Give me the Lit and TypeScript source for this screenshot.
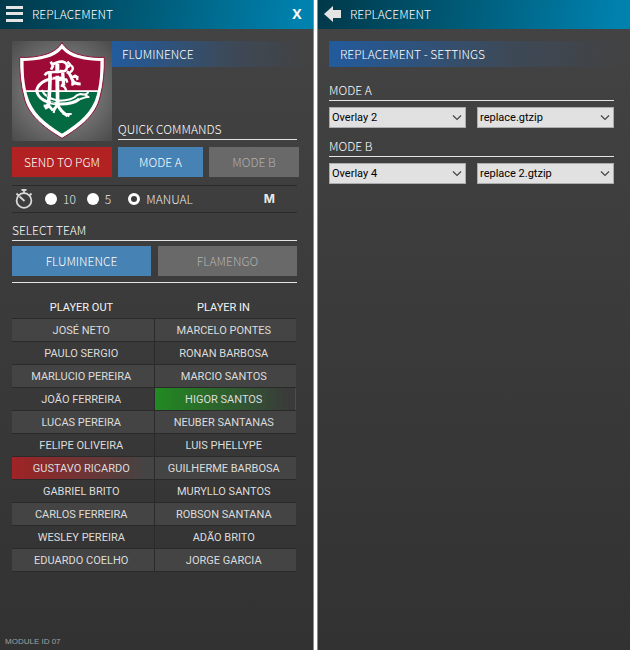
import { LitElement, html, css, svg } from "lit";
import { customElement } from "lit/decorators.js";
import { classMap } from "lit/directives/class-map.js";

const ROWS: [string, string][] = [
  ["JOSÉ NETO", "MARCELO PONTES"],
  ["PAULO SERGIO", "RONAN BARBOSA"],
  ["MARLUCIO PEREIRA", "MARCIO SANTOS"],
  ["JOÃO FERREIRA", "HIGOR SANTOS"],
  ["LUCAS PEREIRA", "NEUBER SANTANAS"],
  ["FELIPE OLIVEIRA", "LUIS PHELLYPE"],
  ["GUSTAVO RICARDO", "GUILHERME BARBOSA"],
  ["GABRIEL BRITO", "MURYLLO SANTOS"],
  ["CARLOS FERREIRA", "ROBSON SANTANA"],
  ["WESLEY PEREIRA", "ADÃO BRITO"],
  ["EDUARDO COELHO", "JORGE GARCIA"],
];
const PLAYER_OUT = "GUSTAVO RICARDO";
const PLAYER_IN = "HIGOR SANTOS";

const shield =
  "M156 14 C146 31 128 43 108 49 C84 56 54 60 29 58 C28 98 32 142 42 177 C54 229 96 265 156 301 C216 265 258 229 270 177 C280 142 284 98 283 58 C258 60 228 56 204 49 C184 43 166 31 156 14 Z";

const crest = svg`
  <defs><clipPath id="field"><path d="M156 32 C143 47 126 56 108 60 C84 67 60 69 40 69 C40 105 44 143 52 172 C65 221 102 254 156 287 C210 254 247 221 260 172 C268 143 272 105 272 69 C252 69 228 67 204 60 C186 56 169 47 156 32 Z"/></clipPath></defs>
  <path d=${shield} fill="#fff" stroke="#8d1338" stroke-width="3"/>
  <g clip-path="url(#field)">
    <rect x="20" y="20" width="272" height="138" fill="#9c0a35"/>
    <rect x="20" y="161" width="272" height="140" fill="#046a41"/>
    <rect x="20" y="157" width="272" height="5" fill="#fff"/>
  </g>
  <g transform="translate(66 51)" fill="none" stroke="#fff" stroke-linejoin="round">
    <path stroke-width="11" d="M54 50 C55 85 52 125 48 158"/>
    <path stroke-width="12" d="M76 26 L76 52 M76 62 L77 156"/>
    <path stroke-width="8" d="M38 61 C44 49 56 51 80 51 L92 48"/>
    <path stroke-width="8" d="M56 20 L63 33 L57 44 M61 27 C74 26 76 18 92 20 C104 22 108 32 103 43 C100 49 92 50 84 47"/>
    <path stroke-width="7" d="M106 20 L114 28 L108 38 M110 29 C121 31 126 38 120 47 L109 57"/>
    <path stroke-width="9" d="M104 50 C116 54 116 67 122 76 C125 83 133 87 146 87"/>
    <path stroke-width="7" d="M118 68 L130 62 L139 68 M133 64 L137 75 M122 78 L121 89 L129 84"/>
    <path stroke-width="10" d="M92 53 L95 92"/>
    <path stroke-width="7" d="M78 75 L103 73 L106 83 M88 88 L99 98 L103 107 M86 91 L95 94"/>
    <path stroke-width="9" d="M91 69 C56 65 20 80 14 105 C16 132 46 145 80 147 C110 148 130 142 142 132"/>
    <path stroke-width="6" d="M29 105 C38 124 58 134 82 137 C108 137 126 131 136 120 L146 117 C156 120 163 118 168 113 L160 120 L170 126 C158 124 154 132 142 132"/>
    <path stroke-width="8" d="M35 153 L50 151 L63 167 M49 155 L39 161"/>
    <path stroke-width="9" d="M76 150 L66 164 M78 151 C84 166 93 173 107 183"/>
    <path stroke-width="6" d="M68 159 L65 174 M92 177 L119 177 M104 178 L112 184"/>
  </g>
  <g transform="translate(66 51)" fill="none" stroke="#9c0a35" stroke-width="2">
    <path d="M62 56 L62 71 M68 55 L68 66 M84 54 L84 66 M84 79 L84 102"/>
  </g>
  <g transform="translate(66 51)" fill="none" stroke="#046a41" stroke-width="2">
    <path d="M69 112 L69 132 M84 112 L84 132 M46 119 L45 126 M57 142 L68 144"/>
  </g>`;

@customElement("app-root")
export class AppRoot extends LitElement {
  static styles = css`
    :host {
      display: block;
      font-family: "Noto Sans CJK JP", "Liberation Sans", sans-serif;
      font-size: 12px;
      font-weight: 300;
      line-height: 16px;
      color: #fff;
    }
    * { box-sizing: border-box; }
    button, select, input { font: inherit; margin: 0; }
    button { border: 0; padding: 0; color: inherit; background: none; }
    svg { display: block; }
    .shell {
      display: grid;
      grid-template-columns: 313fr 5px 312fr;
      min-height: 100vh;
    }
    .split { background: #fff; border: solid #8a8a8a; border-width: 0 1px; }
    .panel {
      display: flex;
      flex-direction: column;
      min-width: 0;
      background: linear-gradient(#444, #3b3b3b 45%, #323232);
    }
    .bar {
      display: flex;
      align-items: center;
      height: 29px;
      padding: 0 11px 2px 6px;
      background: linear-gradient(100deg, #003849, #005a76 45%, #0081ae 95%);
    }
    .bar h1 { flex: 1; margin: 0; font-size: 12px; font-weight: 300; }
    .icon-button { width: 26px; height: 22px; display: flex; align-items: center; }
    .close { font-size: 14px; font-family: "Open Sans", sans-serif; font-weight: 700; width: 10px; }
    .body { flex: 1; display: flex; flex-direction: column; padding: 12px 16px 0 12px; }
    .settings { padding-left: 11px; }
    .hero { display: flex; margin-right: -14px; }
    .crest {
      width: 100px;
      height: 100px;
      background: radial-gradient(circle, #9a9a9a, #4a4a4a);
    }
    .hero-side { flex: 1; display: flex; flex-direction: column; justify-content: space-between; }
    .banner {
      margin: 0;
      padding: 5px 10px;
      font-size: 12px;
      font-weight: 300;
      background: linear-gradient(90deg, #225b9d, #3d4957 60%, transparent);
    }
    .caption {
      margin: 0;
      padding-bottom: 2px;
      font-size: 12px;
      font-weight: 300;
      border-bottom: 1px solid #e4e4e4;
    }
    .quick { margin: 0 14px 1px 6px; }
    .commands {
      display: grid;
      grid-template-columns: 100fr 85fr 90fr;
      gap: 6px;
      margin: 6px -2px 8px 0;
    }
    .action { height: 30px; background: #4682b4; }
    .send { background: #b22222; }
    .idle { background: #696969; color: #b0b0b0; }
    .timer {
      display: flex;
      align-items: center;
      height: 28px;
      padding-left: 3px;
      border: solid #2a2a2a;
      border-width: 1px 0;
      color: #e8e8e8;
    }
    .stopwatch { margin-right: 12px; }
    .choice { display: flex; align-items: center; gap: 6px; margin-right: 11px; }
    .choice input {
      appearance: none;
      width: 12px;
      height: 12px;
      border-radius: 50%;
      background: #fff;
    }
    .choice input:checked { border: 3px solid #fff; background: #3c3c3c; }
    .manual { margin-left: 6px; }
    .key { margin-left: auto; margin-right: 22px; font-family: Inter, sans-serif; font-weight: 700; }
    .select-team { margin-top: 9px; }
    .teams {
      display: grid;
      grid-template-columns: 1fr 1fr;
      gap: 7px;
      padding: 5px 0 6px;
      border-bottom: 1px solid #e4e4e4;
    }
    .players {
      width: calc(100% - 1px);
      margin-top: 12px;
      border-collapse: collapse;
      table-layout: fixed;
      font: 400 11px/16px Roboto, sans-serif;
      text-align: center;
      color: #dcdcdc;
    }
    .players th { height: 23px; padding: 3px 0 0; font-weight: 400; color: #f4f4f4; }
    .players td { height: 23px; padding: 2px 0 0; border: solid #2a2a2a; border-width: 1px 0; }
    .players th, .players td { padding-right: 3px; }
    .players td + td { border-left-width: 1px; }
    .players tbody tr:nth-child(odd) { background: #444; }
    .players .leaving { background: linear-gradient(90deg, #a02325, #444 95%); }
    .players .entering { background: linear-gradient(90deg, #218a21, #3a3a3a 95%); }
    .module { margin: 0; padding: 0 5px; font: 400 8px/16px "Liberation Sans", sans-serif; color: #a0a0a0; }
    .title { padding-left: 11px; margin-right: -14px; }
    .mode { margin-top: 15px; }
    .mode + .mode { margin-top: 10px; }
    .pair { display: grid; grid-template-columns: 1fr 1fr; gap: 11px; margin-top: 6px; }
    .pick { position: relative; }
    .pick select {
      appearance: none;
      display: block;
      width: 100%;
      height: 21px;
      padding: 0 20px 0 2px;
      border: 1px solid #acacac;
      border-radius: 0;
      background: #e1e1e1;
      color: #000;
      font: 400 11px/16px Roboto, sans-serif;
    }
    .pick svg { position: absolute; right: 4px; top: 7px; pointer-events: none; }
  `;

  private picker(label: string, value: string) {
    return html`<div class="pick">
      <select aria-label=${label}><option>${value}</option></select>
      <svg width="10" height="7" viewBox="0 0 10 7"><path d="M1 1.5 L5 5.5 L9 1.5" fill="none" stroke="#444" stroke-width="1.2"/></svg>
    </div>`;
  }

  private mode(name: string, overlay: string, file: string) {
    return html`<section class="mode">
      <h3 class="caption">${name}</h3>
      <div class="pair">
        ${this.picker(`${name} overlay`, overlay)} ${this.picker(`${name} file`, file)}
      </div>
    </section>`;
  }

  render() {
    return html`<div class="shell">
      <main class="panel">
        <header class="bar">
          <button class="icon-button" aria-label="Menu">
            <svg width="17" height="16" viewBox="0 0 17 16" fill="#e4e4e4"><path d="M0 0h17v3H0zM0 6h17v3H0zM0 13h17v3H0z"/></svg>
          </button>
          <h1>REPLACEMENT</h1>
          <button class="close">X</button>
        </header>
        <div class="body">
          <div class="hero">
            <svg class="crest" viewBox="6 9 300 300">${crest}</svg>
            <div class="hero-side">
              <h2 class="banner">FLUMINENCE</h2>
              <h3 class="caption quick">QUICK COMMANDS</h3>
            </div>
          </div>
          <div class="commands">
            <button class="action send">SEND TO PGM</button>
            <button class="action">MODE A</button>
            <button class="action idle">MODE B</button>
          </div>
          <div class="timer">
            <svg class="stopwatch" width="18" height="20" viewBox="0 0 18 20" fill="none" stroke="#d8d8d8">
              <circle cx="9" cy="11.5" r="7.4" stroke-width="1.8" />
              <path d="M6.5 1H11.5M9 1V4M1.5 4.5L3.5 6.5M16.5 4.5L14.5 6.5M4.5 7.5L9.5 12" stroke-width="1.8" />
            </svg>
            <label class="choice"><input type="radio" name="time" />10</label>
            <label class="choice"><input type="radio" name="time" />5</label>
            <label class="choice manual"><input type="radio" name="time" checked />MANUAL</label>
            <button class="key">M</button>
          </div>
          <h3 class="caption select-team">SELECT TEAM</h3>
          <div class="teams">
            <button class="action">FLUMINENCE</button>
            <button class="action idle">FLAMENGO</button>
          </div>
          <table class="players">
            <thead><tr><th>PLAYER OUT</th><th>PLAYER IN</th></tr></thead>
            <tbody>
              ${ROWS.map(([out, into]) => html`<tr>
                <td class=${classMap({ leaving: out === PLAYER_OUT })}>${out}</td>
                <td class=${classMap({ entering: into === PLAYER_IN })}>${into}</td>
              </tr>`)}
            </tbody>
          </table>
        </div>
        <p class="module">MODULE ID 07</p>
      </main>
      <div class="split"></div>
      <aside class="panel">
        <header class="bar">
          <button class="icon-button" aria-label="Back">
            <svg width="17" height="16" viewBox="0 0 17 16"><path d="M0 8L9 0V4H17V12H9V16Z" fill="#e4e4e4"/></svg>
          </button>
          <h1>REPLACEMENT</h1>
        </header>
        <div class="body settings">
          <h2 class="banner title">REPLACEMENT - SETTINGS</h2>
          ${this.mode("MODE A", "Overlay 2", "replace.gtzip")}
          ${this.mode("MODE B", "Overlay 4", "replace 2.gtzip")}
        </div>
      </aside>
    </div>`;
  }
}
